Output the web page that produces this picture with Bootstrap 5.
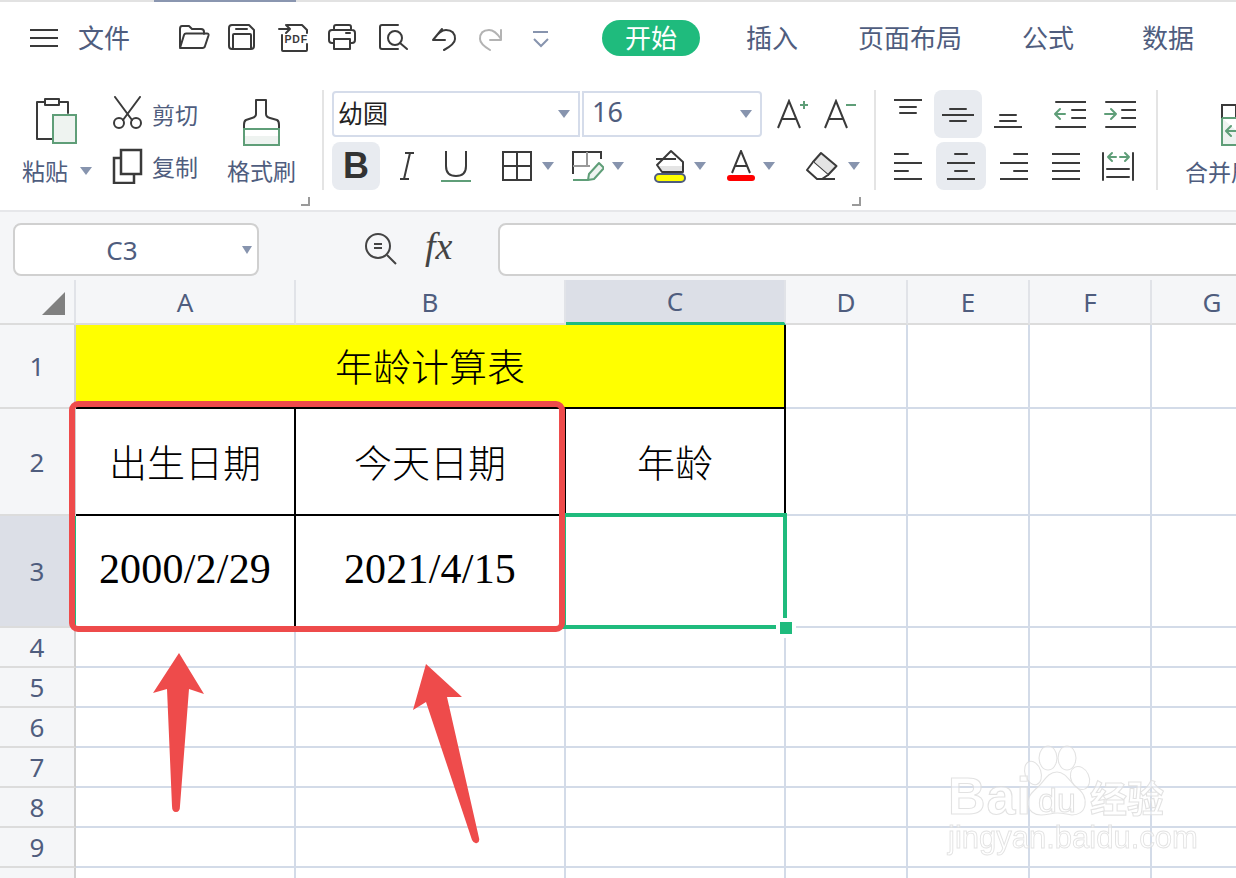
<!DOCTYPE html>
<html lang="zh-CN">
<head>
  <meta charset="UTF-8" />
  <meta name="viewport" content="width=device-width, initial-scale=1" />
  <title>年龄计算表</title>
  <link href="https://cdn.jsdelivr.net/npm/bootstrap@5.3.3/dist/css/bootstrap.min.css" rel="stylesheet" />
  <style>
    html, body { height: 878px; overflow: hidden; }
    body { font-family: "Noto Sans", "Noto Sans CJK SC", sans-serif; color: #4f5d7e; background: #fff; }
    svg { display: block; flex: none; }
    svg .k { fill: none; stroke: #3a3a3a; stroke-width: 2; stroke-linecap: round; stroke-linejoin: round; }
    svg .g { fill: none; stroke: #5f9e78; stroke-width: 2; stroke-linecap: round; stroke-linejoin: round; }
    .app-frame { width: 1236px; height: 878px; overflow: hidden; position: relative; }

    /* title strip and tabs */
    .top-strip { height: 2px; background: #e2e2e2; }
    .top-strip div { width: 142px; height: 2px; margin-left: 154px; background: #8a96b0; }
    .tab-row { height: 73px; padding: 18px 0 0 30px; font-size: 26px; line-height: 36px; white-space: nowrap; }
    .menu-lines { margin: 8px 20px 0 0; }
    .quick-tools { margin-left: 48px; gap: 18px; width: 424px; }
    .tab-pill { width: 98px; height: 36px; border-radius: 18px; background: #1fbb7d; color: #fff; text-align: center; }
    .tab-item { margin-left: 60px; }
    .tab-item.first { margin-left: 46px; }
    .tab-item.last { margin-left: 68px; }

    /* ribbon */
    .ribbon { height: 137px; padding-top: 15px; border-bottom: 2px solid #e6e7ea; white-space: nowrap; }
    .rib-group { height: 100px; position: relative; border-right: 2px solid #e4e4e4; flex: none; }
    .rib-clip { width: 324px; }
    .rib-font { width: 552px; padding: 1px 0 0 8px; }
    .rib-align { width: 282px; padding-left: 8px; }
    .launcher { position: absolute; width: 9px; height: 9px; border-right: 2px solid #9a9a9a; border-bottom: 2px solid #9a9a9a; top: 107px; }
    .rib-clip .launcher { left: 301px; }
    .rib-font .launcher { left: 528px; }
    .rib-label { font-size: 23px; line-height: 28px; }
    .paste-col { width: 90px; margin-left: 22px; padding-top: 8px; }
    .paste-col svg:first-child { margin: 0 0 12px 14px; }
    .cut-col { width: 115px; }
    .cut-row { height: 50px; gap: 9px; padding-top: 6px; }
    .cut-row + .cut-row { margin-top: 1px; padding-top: 7px; }
    .cut-row .rib-label { padding-top: 5px; }
    .brush-col { width: 72px; padding-top: 8px; }
    .brush-col svg { margin: 0 0 11px 16px; }
    .caret-down { width: 0; height: 0; border-left: 6px solid transparent; border-right: 6px solid transparent; border-top: 8px solid #8794ae; flex: none; }
    .font-box { height: 46px; border: 2px solid #d5dcea; background: #fff; padding: 0 8px 0 4px; }
    .font-name { width: 248px; border-radius: 4px 0 0 4px; color: #222; font-size: 25px; }
    .font-size-box { width: 180px; margin-left: 2px; border-radius: 0 4px 4px 0; padding-left: 8px; font-size: 27px; }
    .size-num { margin-top: -4px; }
    .grow-a { margin-left: 15px; }
    .shrink-a { margin-left: 15px; }
    .fmt-row { height: 48px; margin-top: 5px; }
    .tool-on { background: #e8ebf0; border-radius: 8px; }
    .bold-btn { width: 48px; height: 48px; font: 700 36px "Liberation Sans", sans-serif; line-height: 48px; text-align: center; color: #333; }
    .t-italic { margin-left: 19px; }
    .t-under { margin-left: 26px; }
    .t-border { margin-left: 31px; }
    .t-draw { margin-left: 18px; }
    .t-fill { margin-left: 30px; }
    .t-color { margin-left: 21px; }
    .t-erase { margin-left: 31px; }
    .caret-a { margin-left: 10px; }
    .caret-b { margin-left: 8px; }
    .align-row { height: 48px; gap: 2px; }
    .align-row + .align-row { margin-top: 4px; gap: 4px; }
    .align-btn { width: 48px; height: 48px; }
    .align-btn.span50 { width: 50px; }
    .indent-first { margin-left: 12px; }
    .merge-col { margin-left: 27px; }
    .merge-col svg { margin: 14px 0 12px 36px; }

    /* formula bar */
    .formula-bar { height: 68px; background: #f5f6f8; padding: 11px 0 0 13px; }
    .name-box { width: 246px; height: 53px; flex: none; border: 2px solid #d0d0d0; border-radius: 8px; background: #fff; font-size: 26px; position: relative; text-align: center; line-height: 50px; padding-right: 28px; }
    .name-box .caret-down { position: absolute; right: 5px; top: 21px; border-left-width: 5px; border-right-width: 5px; }
    .fx-zoom { margin: 9px 0 0 105px; }
    .fx-mark { width: 40px; flex: none; margin: -3px 0 0 27px; font: italic 38px/52px "Liberation Serif", serif; color: #444; }
    .fx-input { margin-left: 33px; width: 760px; height: 53px; flex: none; border: 2px solid #d0d0d0; border-radius: 8px; background: #fff; }

    /* sheet */
    .sheet-table { table-layout: fixed; border-collapse: separate; border-spacing: 0; width: 1274px; }
    .sheet-table td, .sheet-table th { border-right: 2px solid #d3dbe8; border-bottom: 2px solid #d3dbe8; padding: 0; text-align: center; vertical-align: middle; }
    .sheet-table th { background: #f5f6f8; font-weight: 400; font-size: 26px; line-height: 30px; color: #4f5d7e; border-right-color: #e1e3e8; border-bottom-color: #dcdcdc; }
    .sheet-table thead th { height: 45px; }
    .corner-tri { width: 0; height: 0; border-left: 23px solid transparent; border-bottom: 23px solid #808080; margin: 3px 0 0 42px; }
    .sheet-table tbody th { border-right-color: #d0d0d0; }
    .sheet-table th.col-on { background: #dcdfe7; border-bottom: 3px solid #1fbb7d; }
    .sheet-table tbody th.row-on { background: #dcdfe7; border-right-color: #1fbb7d; }
    .sheet-table td.inked { border-color: #000; color: #000; font-size: 38px; font-weight: 300; line-height: 50px; }
    .sheet-table td.sun { background: #ff0; }
    .sheet-table td.dated { font-family: "Liberation Serif", serif; font-size: 42px; letter-spacing: .2px; padding-bottom: 5px; }
    .r1 { height: 84px; }
    .r2 { height: 107px; }
    .r3 { height: 112px; }
    .rn { height: 40px; }

    /* things lying over the sheet */
    .pick-red { position: absolute; left: 69px; top: 401px; width: 496px; height: 231px; border: 6px solid #ee4b4b; border-radius: 9px; }
    .pick-green { position: absolute; left: 562px; top: 513px; width: 225px; height: 116px; border: 4px solid #1fbb7d; }
    .pick-handle { position: absolute; left: 776px; top: 618px; width: 20px; height: 20px; border: 4px solid #fff; background: #1fbb7d; }
    .arrows { position: absolute; left: 0; top: 0; }
    .wm { position: absolute; left: 0; top: 0; width: 1236px; height: 878px; filter: blur(.7px); opacity: .85; pointer-events: none; }
    .wm span { position: absolute; color: rgba(255,255,255,.55); -webkit-text-stroke: 1.1px #dedede; white-space: nowrap; font-family: "Liberation Sans", sans-serif; }
    .wm-bai { left: 948px; top: 766px; font-size: 52px; line-height: 60px; font-weight: 700; letter-spacing: 1px; }
    .wm-du { left: 1038px; top: 780px; font-size: 34px; line-height: 40px; }
    .wm-cn { left: 1090px; top: 774px; font-size: 37px; line-height: 46px; font-weight: 700; font-family: "Noto Sans CJK SC", sans-serif !important; }
    .wm-url { left: 948px; top: 820px; font-size: 31px; line-height: 36px; -webkit-text-stroke-width: .9px !important; }
    .wm-paw { position: absolute; left: 1020px; top: 740px; }
  </style>
</head>
<body>
<div class="app-frame">
  <div class="top-strip"><div></div></div>

  <div class="tab-row d-flex align-items-start">
    <svg class="menu-lines" width="28" height="20" viewBox="0 0 28 20"><path d="M0 2h28M0 10h28M0 18h28" fill="none" stroke="#3a3a3a" stroke-width="2"/></svg>
    <span>文件</span>
    <div class="quick-tools d-flex">
      <svg width="32" height="32" viewBox="0 0 32 32"><path class="k" d="M2 27V9q0-3 2-3h7l3 3h9q3 0 3 3v2M2 28l4-13q.5-1.500 2-1.500h21q2 0 1.500 2L27 26q-.5 2-2.500 2z"/></svg>
      <svg width="32" height="32" viewBox="0 0 32 32"><path class="k" d="M4 5h17l5 5v16q0 3-3 3H4q-3 0-3-3V8q0-3 3-3zM8 9h11M5 29V15q0-1 1-1h16q1 0 1 1v14"/></svg>
      <svg width="32" height="34" viewBox="0 0 32 34"><path class="k" d="M9 5h15l5 5v3M29 24v6q0 1-1 1H5q-1 0-1-1V15M1 9h11M8 5l4 4-4 4"/><text x="6.500" y="23" font-family="Liberation Sans, sans-serif" font-weight="700" font-size="10.500" fill="#3a3a3a" letter-spacing=".8">PDF</text></svg>
      <svg width="32" height="32" viewBox="0 0 32 32"><path class="k" d="M6 10V7q0-2 2-2h13q2 0 2 2v3M6 23H4q-3 0-3-3v-7q0-3 3-3h20q3 0 3 3v7q0 3-3 3h-2M6 19h16v10H6zM18 13h4"/></svg>
      <svg width="32" height="32" viewBox="0 0 32 32"><path class="k" d="M20 5H4q-2 0-2 2v20q0 2 2 2h16"/><circle class="k" cx="17" cy="18" r="7"/><path class="k" d="M22 23l7 6"/></svg>
      <svg width="32" height="32" viewBox="0 0 32 32"><path class="k" d="M14 9L5 20h12M6 19Q12 10 18 10Q27 10 27 19Q27 24 16 30"/></svg>
      <svg width="32" height="32" viewBox="0 0 32 32"><path d="M23 10v10H12M23 19Q17 10 11 10Q2 10 2 19Q2 24 12 30" fill="none" stroke="#b3b3b3" stroke-width="2" stroke-linecap="round" stroke-linejoin="round"/></svg>
      <svg width="32" height="32" viewBox="0 0 32 32"><path d="M5 12h15M6 19l7 7 7-7" fill="none" stroke="#8794ae" stroke-width="2"/></svg>
    </div>
    <div class="tab-pill">开始</div>
    <span class="tab-item first">插入</span>
    <span class="tab-item">页面布局</span>
    <span class="tab-item">公式</span>
    <span class="tab-item last">数据</span>
  </div>

  <div class="ribbon d-flex">
    <div class="rib-group rib-clip d-flex">
      <div class="paste-col">
        <svg width="42" height="47" viewBox="0 0 42 47"><path class="k" d="M1 41V4h8M23 4h9v11M1 41h15M9 1h14v6H9z" stroke-linecap="square"/><path d="M17 17h23v28H17z" fill="#eef3f0" stroke="#5f9e78" stroke-width="2"/></svg>
        <div class="rib-label d-flex align-items-center gap-2">粘贴<span class="caret-down ms-1"></span></div>
      </div>
      <div class="cut-col">
        <div class="cut-row d-flex">
          <svg width="31" height="33" viewBox="0 0 31 33"><path class="k" d="M3 1l17 23M28 1L11 24"/><circle class="k" cx="7" cy="27" r="5"/><circle class="k" cx="24" cy="27" r="5"/></svg>
          <span class="rib-label">剪切</span>
        </div>
        <div class="cut-row d-flex">
          <svg width="31" height="36" viewBox="0 0 31 36"><path d="M9 2h20v24H9z" fill="#fff" stroke="#3a3a3a" stroke-width="2.500"/><path d="M9 10H2v25h20v-9" fill="none" stroke="#3a3a3a" stroke-width="2.500"/></svg>
          <span class="rib-label">复制</span>
        </div>
      </div>
      <div class="brush-col">
        <svg width="38" height="48" viewBox="0 0 38 48"><path class="k" d="M13 16V2h10v14q0 3 4 4l7 2q2 1 2 5v4M13 16q0 3-4 4l-6 2q-2 1-2 5v4"/><path d="M1 31h35v16H1z" fill="#eef3f0" stroke="#5f9e78" stroke-width="2"/><path d="M2 32h33v6H2z" fill="#fff"/></svg>
        <div class="rib-label">格式刷</div>
      </div>
      <div class="launcher"></div>
    </div>

    <div class="rib-group rib-font">
      <div class="d-flex align-items-center">
        <div class="font-box font-name d-flex align-items-center justify-content-between">幼圆<span class="caret-down"></span></div>
        <div class="font-box font-size-box d-flex align-items-center justify-content-between"><span class="size-num">16</span><span class="caret-down"></span></div>
        <svg class="grow-a" width="32" height="30" viewBox="0 0 32 30"><path d="M1 29L12 2l11 27M5 20h14" fill="none" stroke="#3a3a3a" stroke-width="2"/><path d="M23 6h8M27 2v8" stroke="#5f9e78" stroke-width="2"/></svg>
        <svg class="shrink-a" width="32" height="30" viewBox="0 0 32 30"><path d="M1 29L12 2l11 27M5 20h14" fill="none" stroke="#3a3a3a" stroke-width="2"/><path d="M22 6h10" stroke="#5f9e78" stroke-width="2"/></svg>
      </div>
      <div class="fmt-row d-flex align-items-center">
        <div class="bold-btn tool-on">B</div>
        <svg class="t-italic" width="16" height="30" viewBox="0 0 16 30"><path d="M6 2h9M1 28h9M11 2L5 28" fill="none" stroke="#3a3a3a" stroke-width="2"/></svg>
        <svg class="t-under" width="30" height="32" viewBox="0 0 30 32"><path d="M5 1v15q0 10 10 10t10-10V1" fill="none" stroke="#3a3a3a" stroke-width="2"/><path d="M0 31h30" stroke="#5f9e78" stroke-width="2"/></svg>
        <svg class="t-border" width="30" height="30" viewBox="0 0 30 30"><path d="M1 1h28v28H1zM15 1v28M1 15h28" fill="none" stroke="#3a3a3a" stroke-width="2"/></svg>
        <span class="caret-down caret-a"></span>
        <svg class="t-draw" width="32" height="32" viewBox="0 0 32 32"><path d="M1 24V2h28v7" fill="none" stroke="#3a3a3a" stroke-width="2"/><path d="M1 16h17M15 2v15" fill="none" stroke="#999" stroke-width="2"/><path d="M1 30h15" stroke="#5f9e78" stroke-width="2"/><path d="M16 30l1-6 10-11 5 5-10 11z" fill="#eef3f0" stroke="#5f9e78" stroke-width="2" stroke-linejoin="round"/></svg>
        <span class="caret-down caret-b"></span>
        <svg class="t-fill" width="32" height="34" viewBox="0 0 32 34"><path d="M5 17h24v6H8z" fill="#e4e4e4"/><path d="M17 2l12 11v10H8l-5-7zM2 10h20" fill="none" stroke="#3a3a3a" stroke-width="2" stroke-linejoin="round"/><rect x="1" y="25" width="30" height="8" rx="4" fill="#ff0" stroke="#4f5d7e" stroke-width="2"/></svg>
        <span class="caret-down caret-b"></span>
        <svg class="t-color" width="28" height="32" viewBox="0 0 28 32"><path d="M5 23L14 1l9 22M8 16h12" fill="none" stroke="#3a3a3a" stroke-width="2"/><rect y="25" width="28" height="6" rx="3" fill="#f00"/></svg>
        <span class="caret-down caret-b"></span>
        <svg class="t-erase" width="32" height="32" viewBox="0 0 32 32"><path d="M15 3l15.500 13L22 25 7 12z" fill="#e4e4e4" stroke="#3a3a3a" stroke-width="2" stroke-linejoin="round"/><path d="M7 12L1 20l10 9h5l6-4" fill="#fff" stroke="#3a3a3a" stroke-width="2" stroke-linejoin="round"/><path d="M11 29h18" stroke="#3a3a3a" stroke-width="2"/></svg>
        <span class="caret-down caret-a"></span>
      </div>
      <div class="launcher"></div>
    </div>

    <div class="rib-group rib-align">
      <div class="align-row d-flex">
        <div class="align-btn d-flex align-items-center justify-content-center"><svg width="28" height="48" viewBox="0 0 28 48"><path class="k" d="M0 10h28M6 17h16M6 23h16" stroke-linecap="butt"/></svg></div>
        <div class="align-btn tool-on d-flex align-items-center justify-content-center"><svg width="32" height="48" viewBox="0 0 32 48"><path class="k" d="M8 19h16M0 25h32M8 31h16" stroke-linecap="butt"/></svg></div>
        <div class="align-btn d-flex align-items-center justify-content-center"><svg width="28" height="48" viewBox="0 0 28 48"><path class="k" d="M6 25h16M6 31h16M0 37h28" stroke-linecap="butt"/></svg></div>
        <div class="align-btn indent-first d-flex align-items-center justify-content-center"><svg width="32" height="48" viewBox="0 0 32 48"><path class="k" d="M2 12h30M18 20h14M18 28h14M2 37h30" stroke-linecap="butt"/><path class="g" d="M11 24H1M6 19l-5 5 5 5"/></svg></div>
        <div class="align-btn d-flex align-items-center justify-content-center"><svg width="32" height="48" viewBox="0 0 32 48"><path class="k" d="M2 12h30M18 20h14M18 28h14M2 37h30" stroke-linecap="butt"/><path class="g" d="M1 24h11M7 19l5 5-5 5"/></svg></div>
      </div>
      <div class="align-row d-flex">
        <div class="align-btn d-flex align-items-center justify-content-center"><svg width="28" height="48" viewBox="0 0 28 48"><path class="k" d="M0 12h14M0 21h28M0 29h14M0 37h28" stroke-linecap="butt"/></svg></div>
        <div class="align-btn span50 tool-on d-flex align-items-center justify-content-center"><svg width="28" height="48" viewBox="0 0 28 48"><path class="k" d="M8 12h12M0 21h28M8 29h12M0 37h28" stroke-linecap="butt"/></svg></div>
        <div class="align-btn d-flex align-items-center justify-content-center"><svg width="28" height="48" viewBox="0 0 28 48"><path class="k" d="M14 12h14M0 21h28M14 29h14M0 37h28" stroke-linecap="butt"/></svg></div>
        <div class="align-btn d-flex align-items-center justify-content-center"><svg width="28" height="48" viewBox="0 0 28 48"><path class="k" d="M0 12h28M0 21h28M0 29h28M0 37h28" stroke-linecap="butt"/></svg></div>
        <div class="align-btn d-flex align-items-center justify-content-center"><svg width="32" height="48" viewBox="0 0 32 48"><path class="k" d="M1 11v27M31 11v27M5 27h22M5 35h22" stroke-linecap="butt"/><path class="g" d="M14 15H6M10 11l-4 4 4 4M18 15h9M23 11l4 4-4 4"/></svg></div>
      </div>
    </div>

    <div class="merge-col rib-label">
      <svg width="32" height="42" viewBox="0 0 32 42"><path d="M1 14V1h14v13" fill="none" stroke="#3a3a3a" stroke-width="2"/><path d="M15 1h17v13" fill="none" stroke="#999" stroke-width="2"/><path d="M1 14v27h31M1 14h31" fill="#eef3f0" stroke="#5f9e78" stroke-width="2"/><path class="g" d="M16 27H6M10 22l-5 5 5 5"/></svg>
      <div class="merge-lbl">合并居中</div>
    </div>
  </div>

  <div class="formula-bar d-flex">
    <div class="name-box">C3<span class="caret-down"></span></div>
    <svg class="fx-zoom" width="34" height="34" viewBox="0 0 34 34"><circle cx="14" cy="14" r="12" fill="none" stroke="#444" stroke-width="2"/><path d="M10 12h8M10 16h8M23 23l9 9" fill="none" stroke="#444" stroke-width="2"/></svg>
    <div class="fx-mark">fx</div>
    <div class="fx-input"></div>
  </div>

  <table class="sheet-table">
    <colgroup>
      <col style="width:76px" /><col style="width:220px" /><col style="width:270px" /><col style="width:220px" /><col style="width:122px" /><col style="width:122px" /><col style="width:122px" /><col style="width:122px" />
    </colgroup>
    <thead>
      <tr>
        <th><div class="corner-tri"></div></th>
        <th>A</th><th>B</th><th class="col-on">C</th><th>D</th><th>E</th><th>F</th><th>G</th>
      </tr>
    </thead>
    <tbody>
      <tr class="r1"><th>1</th><td class="inked sun" colspan="3">年龄计算表</td><td></td><td></td><td></td><td></td></tr>
      <tr class="r2"><th>2</th><td class="inked">出生日期</td><td class="inked">今天日期</td><td class="inked">年龄</td><td></td><td></td><td></td><td></td></tr>
      <tr class="r3"><th class="row-on">3</th><td class="inked dated">2000/2/29</td><td class="inked dated">2021/4/15</td><td></td><td></td><td></td><td></td><td></td></tr>
      <tr class="rn"><th>4</th><td></td><td></td><td></td><td></td><td></td><td></td><td></td></tr>
      <tr class="rn"><th>5</th><td></td><td></td><td></td><td></td><td></td><td></td><td></td></tr>
      <tr class="rn"><th>6</th><td></td><td></td><td></td><td></td><td></td><td></td><td></td></tr>
      <tr class="rn"><th>7</th><td></td><td></td><td></td><td></td><td></td><td></td><td></td></tr>
      <tr class="rn"><th>8</th><td></td><td></td><td></td><td></td><td></td><td></td><td></td></tr>
      <tr class="rn"><th>9</th><td></td><td></td><td></td><td></td><td></td><td></td><td></td></tr>
      <tr class="rn"><th>10</th><td></td><td></td><td></td><td></td><td></td><td></td><td></td></tr>
    </tbody>
  </table>

  <div class="pick-green"></div>
  <div class="pick-handle"></div>
  <div class="pick-red"></div>
  <svg class="arrows" width="1236" height="878" viewBox="0 0 1236 878">
    <path fill="#ee4b4b" d="M179 653L153 693 167 689 172 806Q172 812 176 812T180 806L189 689 204 694Z"/>
    <path fill="#ee4b4b" d="M426 664L413 710 426 702 472 840Q474 844 477 843T479 838L447 697 462 697Z"/>
  </svg>

  <div class="wm">
    <svg class="wm-paw" width="80" height="90" viewBox="0 0 80 90"><g fill="rgba(255,255,255,.55)" stroke="#dedede" stroke-width="1.100"><ellipse cx="13" cy="33" rx="8" ry="12" transform="rotate(-18 13 33)"/><ellipse cx="28" cy="18" rx="9" ry="12"/><ellipse cx="47" cy="18" rx="9" ry="12"/><ellipse cx="60" cy="38" rx="9" ry="12" transform="rotate(-25 60 38)"/><path d="M37 32c8 0 12 8 18 14 8 6 11 11 10 19-1 7-7 10-13 10-6-1-10-2-15-2s-10 2-16 2c-7 0-12-4-13-10-1-8 4-13 11-19 6-6 9-14 18-14z"/></g></svg>
    <span class="wm-bai">Bai</span>
    <span class="wm-du">du</span>
    <span class="wm-cn">经验</span>
    <span class="wm-url">jingyan.baidu.com</span>
  </div>
</div>

<script src="https://cdn.jsdelivr.net/npm/bootstrap@5.3.3/dist/js/bootstrap.bundle.min.js"></script>
</body>
</html>
